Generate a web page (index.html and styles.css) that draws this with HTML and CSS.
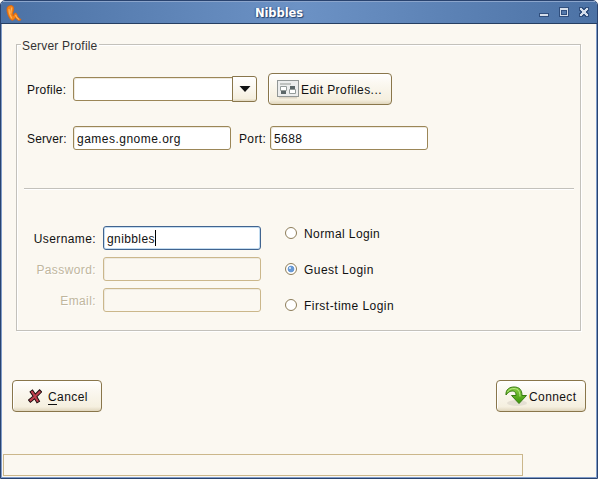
FILE: index.html
```html
<!DOCTYPE html>
<html lang="en">
<head>
<meta charset="utf-8">
<title>Nibbles</title>
<link rel="stylesheet" href="styles.css">
</head>
<body>
<div class="window">
  <header class="titlebar">
    <svg class="app-icon" width="18" height="18" viewBox="0 0 18 18"><path d="M2 4.500C2 2.500 4 1.500 6 1.500C8.500 1.500 9 4 8.500 6C8 8 7.500 9 8 12L9.500 9.500C10.500 8.500 11.500 9 12 10.500C12.500 13 13.500 13.500 16 15.500C16 16.500 14 17 12.500 16C11.500 15 11 14 10.500 13.500C9.500 15.500 8 17 6.500 16C4.500 15 1.500 9 2 4.500Z" fill="#f58316" stroke="#e0650c" stroke-width=".8"/><path d="M4 5C4 9.500 5.500 12.500 7 14.500M6.500 3.500C7 5.500 5.500 6.500 6 9.500M10.500 11Q11.500 14 14 15.500" fill="none" stroke="#ffb055" stroke-width="1.200"/></svg>
    <h1 class="title">Nibbles</h1>
    <svg class="controls" width="54" height="14" viewBox="0 0 54 14" shape-rendering="crispEdges"><path fill="#304f7e" d="M0 7h10v4H0zM20 1h10v10H20z"/><path fill="#d5deeb" d="M1 8h8v2H1zM21 2h8v8h-8z"/><path fill="#304f7e" d="M22 4h6v5h-6z"/><path fill="#5479ab" d="M23 5h4v3h-4z"/><path fill="#304f7e" d="M40 1h4v1h2v-1h4v4h-1v2h1v4h-4v-1h-2v1h-4v-4h1v-2h-1z"/><path fill="#d5deeb" d="M41 2h2v1h1v1h2v-1h1v-1h2v2h-1v1h-1v2h1v1h1v2h-2v-1h-1v-1h-2v1h-1v1h-2v-2h1v-1h1v-2h-1v-1h-1z"/></svg>
  </header>
  <main class="content">
    <section class="group">
      <h2 class="legend"><span>Server Profile</span></h2>
      <div class="row profile-row">
        <label class="label-short profile-label">Profile:</label>
        <div class="combo"><div class="entry combo-entry"></div><div class="combo-button"><svg width="12" height="8" viewBox="0 0 12 8"><path d="M.5 1h11L6 7z" fill="#111"/></svg></div></div>
        <button class="button edit">
          <svg width="22" height="19" viewBox="0 0 22 19"><path d="M2 17.500h18" stroke="#ddd5c5" stroke-width="2"/><rect x=".5" y=".5" width="21" height="16" fill="#eceded" stroke="#929796"/><path fill="#bfc2c0" d="M3 3h11v2H3z"/><path fill="#5b6668" d="M4 11h5v3H4zM13 6h5v3h-5z"/><path fill="#fff" stroke="#959c9b" d="M3.500 6.500h6v4h-6zM12.500 9.500h6v4h-6z"/></svg>
          <span class="edit-text">Edit Profiles...</span>
        </button>
      </div>
      <div class="row server-row">
        <label class="label-short server-label">Server:</label>
        <div class="entry server-entry">games.gnome.org</div>
        <label class="port-label">Port:</label>
        <div class="entry port-entry">5688</div>
      </div>
      <hr class="rule">
      <div class="login">
        <div class="credentials">
          <label class="user-label">Username:</label><div class="entry focused">gnibbles<i class="caret"></i></div>
          <label class="muted pass-label">Password:</label><div class="entry disabled"></div>
          <label class="muted email-label">Email:</label><div class="entry disabled"></div>
        </div>
        <div class="radios">
          <label class="radio"><i class="dot"></i><span>Normal Login</span></label>
          <label class="radio"><i class="dot checked"></i><span class="guest">Guest Login</span></label>
          <label class="radio"><i class="dot"></i><span class="first">First-time Login</span></label>
        </div>
      </div>
    </section>
    <div class="actions">
      <button class="button cancel">
        <svg width="14" height="15" viewBox="0 0 14 15"><path d="M3 1.500L6.500 6.500L10.500 13.500M13 1.500L7 7.500L1 12.500" fill="none" stroke="#180b0d" stroke-width="4"/><path d="M3.500 2.200L6.500 6.500L10 12.700M12.300 2.200L7 7.500L1.800 11.900" fill="none" stroke="#bd3f4e" stroke-width="2.200"/></svg>
        <span><u>C</u>ancel</span>
      </button>
      <button class="button connect">
        <svg width="23" height="21" viewBox="0 0 23 21"><defs><linearGradient id="green" x1="0" y1="0" x2="0" y2="1"><stop stop-color="#8bcf45"/><stop offset="1" stop-color="#3c9508"/></linearGradient></defs><ellipse cx="12" cy="17" rx="10" ry="3" fill="#e5dfd3"/><path d="M1 9C.5 3 5 1 9 1C14.500 1 17 4 17 9.500H21.500L14 17.500L6.500 9.500H11C11 6 9.500 5 7 5C4 5 3 7 1 9Z" fill="url(#green)" stroke="#377a12"/><path d="M2.500 6C5 2 10 1.500 13 4C14.500 5.500 15 8 15 10.500" fill="none" stroke="#b9e785"/></svg>
        <span>Connect</span>
      </button>
    </div>
    <div class="progress"></div>
  </main>
</div>
</body>
</html>
```
FILE: styles.css
```css
* { box-sizing: border-box; }
html { background: #fff; }
body {
  margin: 0;
  font: 12px/16px "Liberation Sans", Arial, sans-serif;
  letter-spacing: .4px;
  color: #111;
}
h1, h2, hr { margin: 0; font: inherit; }
label, span { white-space: nowrap; }
svg { display: block; flex: none; }
.window {
  width: 598px;
  height: 479px;
  border: 1px solid #29436f;
  border-radius: 5px 5px 0 0;
  background: #fbf8f1;
  overflow: hidden;
}
.titlebar {
  height: 23px;
  display: flex;
  align-items: center;
  justify-content: space-between;
  padding: 0 4px 0 4px;
  background: linear-gradient(90deg, #4c72a5, #6c92c5 50%, #4c72a5);
  border-top: 1px solid #8ba5cc;
  border-bottom: 1px solid #263f62;
}
.title {
  width: 48px;
  font: bold 11.5px/16px "DejaVu Sans", sans-serif;
  letter-spacing: -.1px;
  color: #fff;
  text-shadow: 1px 1px 1px #25436f, -1px 0 1px #405f8b;
  margin-right: 4px;
}
.content {
  height: 454px;
  display: flex;
  flex-direction: column;
  border: solid #809cc9;
  border-width: 0 1px 1px;
}
.group {
  width: 565px;
  height: 287px;
  margin: 20px 0 0 14px;
  border: 1px solid #c3c1bb;
  box-shadow: 1px 1px #fff, inset 1px 1px #fff;
}
.legend {
  width: max-content;
  height: 16px;
  margin: -8px 0 0 4px;
  padding: 1px 1px 0;
  background: #fbf8f1;
  color: #333;
  letter-spacing: .2px;
}
.row { display: flex; align-items: center; padding-left: 10px; }
.profile-row { margin-top: 20px; height: 32px; }
.profile-row .profile-label, .edit-text { padding-top: 1px; }
.server-row { margin-top: 21px; height: 24px; }
.server-row label { padding-top: 1px; }
.label-short { width: 46px; }
.profile-label { letter-spacing: .25px; }
.server-label { letter-spacing: .15px; }
.combo { display: flex; align-items: center; width: 184px; }
.entry {
  height: 24px;
  border: 1px solid #9b8657;
  border-radius: 3px;
  background: #fff;
  box-shadow: inset 1px 1px #eeeae0;
  padding: 4px 3px 2px;
}
.combo-entry { width: 160px; border-radius: 3px 0 0 3px; }
.combo-button {
  width: 25px;
  height: 26px;
  margin-left: -1px;
  display: grid;
  place-items: center;
  border: 1px solid #89764b;
  border-radius: 0 3px 3px 0;
  background: linear-gradient(#fff, #fbf8f1 45%, #f5efdf 90%, #e0d6bd);
}
.button {
  height: 32px;
  display: flex;
  align-items: center;
  padding: 0 8px;
  border: 1px solid #89764b;
  border-radius: 4px;
  font: inherit;
  letter-spacing: inherit;
  color: inherit;
  background: linear-gradient(#fff, #fbf8f1 30%, #f5efdf 86%, #e0d6bd);
  box-shadow: inset 1px 1px #fff;
}
.edit { width: 124px; margin-left: 11px; gap: 2px; }
.edit-text { letter-spacing: .43px; }
.server-entry { width: 158px; letter-spacing: .48px; }
.port-label { width: 31px; margin-left: 8px; letter-spacing: .35px; }
.port-entry { width: 158px; }
.rule { width: 550px; height: 2px; margin: 38px 0 0 7px; border: 0; border-top: 1px solid #c3c1bb; background: #fff; }
.login { display: flex; margin: 36px 0 0 16px; }
.credentials {
  display: grid;
  grid-template-columns: 64px 158px;
  grid-auto-rows: 24px;
  gap: 7px 6px;
  align-items: center;
}
.credentials label { text-align: right; padding: 1px 1px 0 0; }
.focused {
  display: flex;
  border-color: #41648f;
  box-shadow: inset 0 0 0 1px #c3dcf0;
}
.caret { width: 1px; height: 16px; margin-top: -1px; background: #000; }
.muted { color: #c0b69d; text-shadow: 1px 1px #fff; }
.disabled { border-color: #cbb78b; background: transparent; }
.radios { display: flex; flex-direction: column; gap: 20px; margin: -1px 0 0 24px; }
.radio { display: flex; align-items: center; gap: 7px; height: 16px; }
.radio span { padding-top: 2px; }
.guest, .first { letter-spacing: .46px; }
.dot {
  width: 12px;
  height: 12px;
  border: 1px solid #8d7d59;
  border-radius: 50%;
  background: #fff;
}
.checked { background: radial-gradient(circle at 4px 4px, #c8dcf3 0 1px, transparent 1.5px), radial-gradient(circle, #6899d4 0 3px, #fff 3.7px); }
.actions { display: flex; justify-content: space-between; padding: 0 10px; margin-top: 49px; }
.cancel, .connect { width: 90px; }
.cancel span, .connect span { padding-top: 1px; }
.cancel { padding-left: 15px; gap: 6px; }
.connect { padding-left: 8px; gap: 1px; }
u { text-decoration: none; box-shadow: 0 1px #111; line-height: 12px; }
.progress { width: 520px; height: 22px; margin: 42px 0 0 1px; border: 1px solid #cbb78b; }
```
